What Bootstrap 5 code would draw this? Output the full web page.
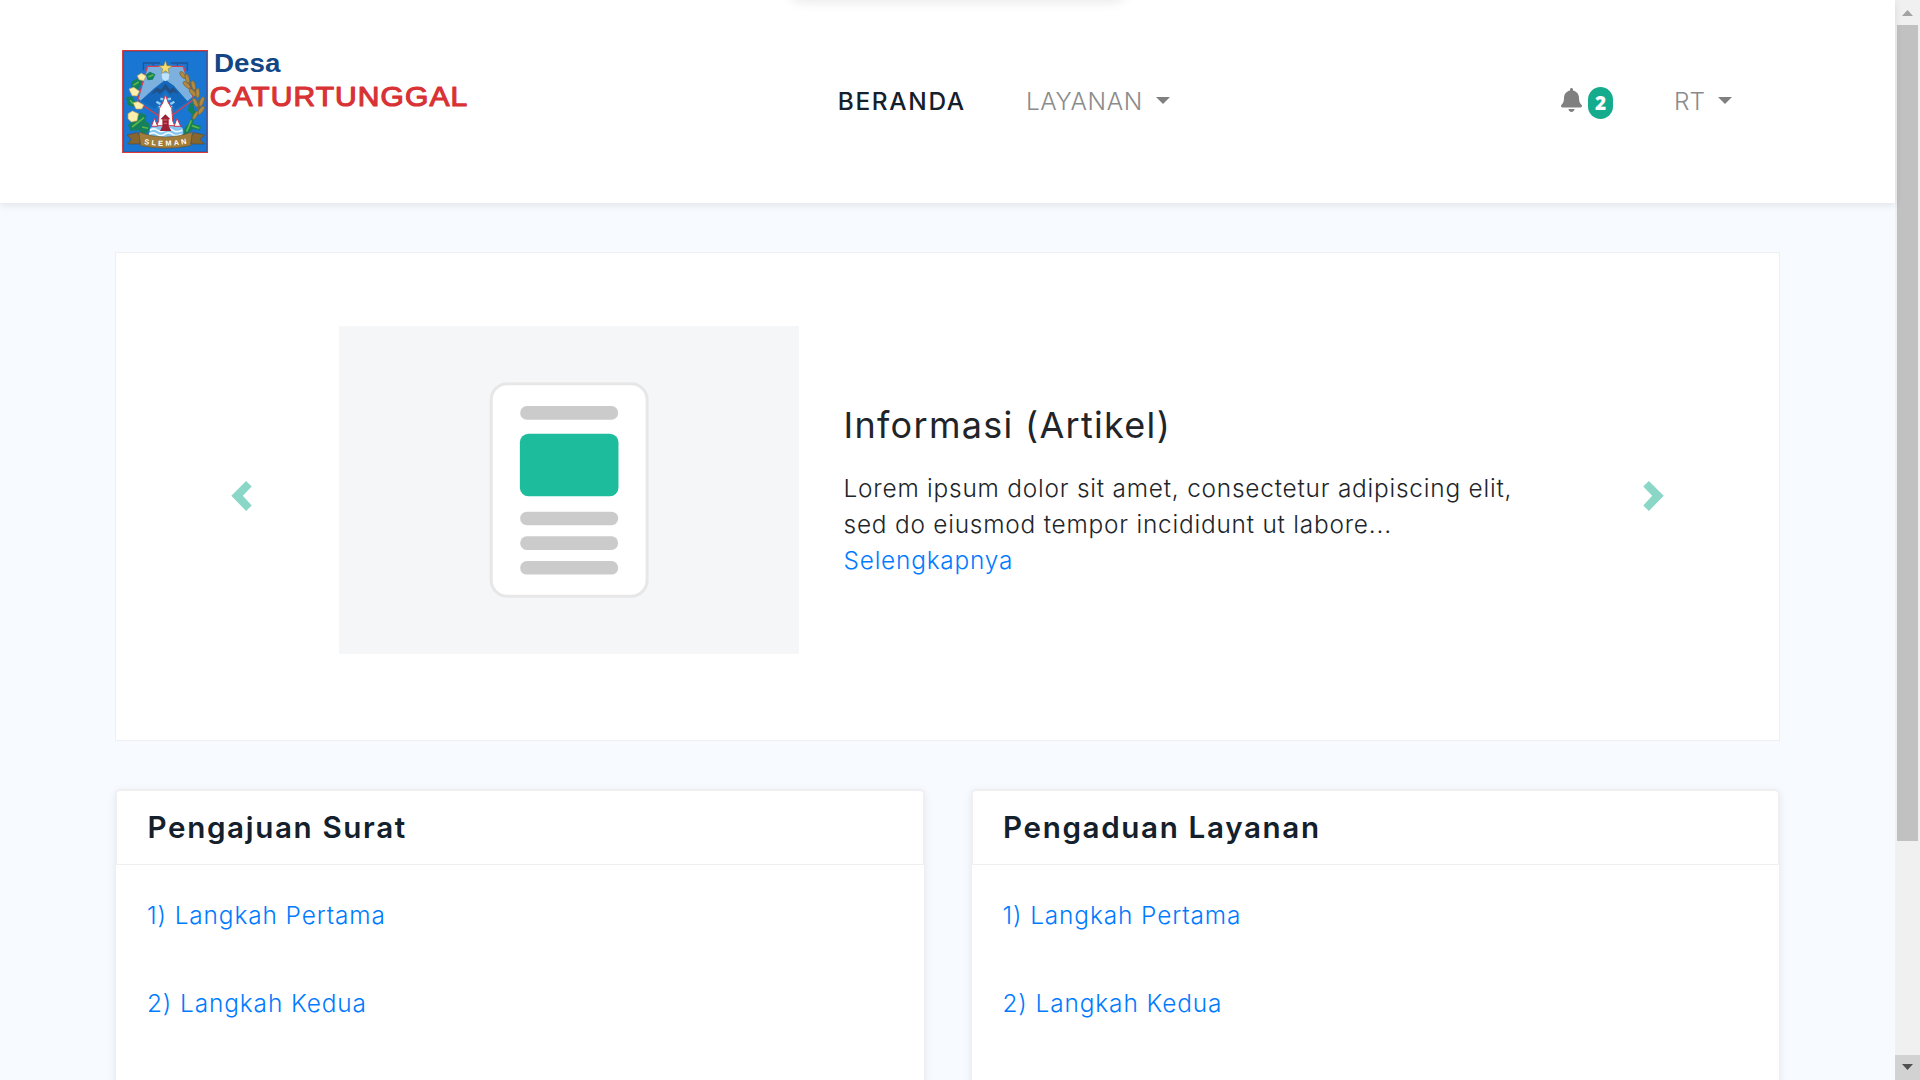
<!DOCTYPE html>
<html lang="id">
<head>
<meta charset="utf-8">
<title>Desa Caturtunggal</title>
<meta name="viewport" content="width=device-width, initial-scale=1">
<link href="https://cdn.jsdelivr.net/npm/bootstrap@5.3.0/dist/css/bootstrap.min.css" rel="stylesheet">
<style>
body{font-family:Inter,"Open Sans",sans-serif;font-weight:300;font-size:24.4px;line-height:36px;letter-spacing:.79px;background:#f7faff;color:#212529;overflow:hidden}
a{text-decoration:none;color:#007bff}
.page{width:1895px}
.wrap{width:1665px;margin:0 auto}
.topbar{height:203px;background:#fff;box-shadow:0 2px 8px rgba(0,0,0,.1)}
.topbar .wrap{padding-left:7px;padding-right:48px}
.window-shade{position:absolute;top:-20px;left:794px;width:328px;height:18px;box-shadow:0 0 12px 4px rgba(0,0,0,.09);border-radius:8px}
.menu{margin-left:369px;gap:60px;padding-bottom:1px}
.user{gap:61px;padding-bottom:1px}
.menu a,.user a{color:#8b8b8b;white-space:nowrap;letter-spacing:.6px}
.menu a.now{color:#14202b;font-weight:500;letter-spacing:1.7px}
.user a.role{letter-spacing:0}
.caret{display:inline-block;border:7px solid transparent;border-top-color:#808080;border-bottom:0;margin-left:13px;vertical-align:6px}
.user .caret{margin-left:13px}
.bell{margin-bottom:3px}
.count{width:25px;height:32px;border-radius:12.5px;background:#15ac8d;color:#fff;font:800 19px/32px "Open Sans",sans-serif;letter-spacing:0;text-align:center;margin:4px 0 0 6px}
.slide-box{margin-top:49px;height:489px;background:#fff;border:1px solid #eeeff1;padding:73px 115px 0 114.5px}
.slide-art{margin-left:87px}
.slide-text{width:700px;margin-left:45px;padding-top:2px}
.slide-text h3{font-size:36px;line-height:42px;font-weight:400;letter-spacing:1.3px;margin:0 0 24px}
.arrow{margin-top:12px}
.panels{margin-top:48px;gap:46px}
.panel{flex:1;border:1px solid #efeff1;border-radius:5px;background:#fff;box-shadow:0 2px 8px rgba(0,0,0,.08);height:400px}
.panel-head{height:75px;border:1px solid #efeff1;border-radius:4px 4px 0 0;padding:0 30.5px;font-size:29.6px;font-weight:600;letter-spacing:1.65px;line-height:73px;color:#14202b}
.panel-steps{padding:32px 31px;gap:52px;letter-spacing:.9px}
.scroll{width:25px;background:#f0f0f0}
.thumb{width:21px;height:816px;background:#c1c1c1}
.scroll-end{height:25px}
</style>
<script src="https://cdn.jsdelivr.net/npm/bootstrap@5.3.0/dist/js/bootstrap.bundle.min.js"></script>
</head>
<body>
<div class="d-flex vh-100 overflow-hidden">
<div class="page flex-shrink-0">
  <header class="topbar position-relative">
    <div class="window-shade"></div>
    <div class="wrap h-100 d-flex align-items-center">
      <a href="#" class="d-block">
        <svg class="d-block" width="346.7" height="103.3" viewBox="66 59 1040 310">
          <rect x="68" y="61" width="254" height="306" fill="#1976d2" stroke="#d7393d" stroke-width="4"/>
          <rect x="71" y="64" width="248" height="300" fill="none" stroke="#31589b" stroke-width="2"/>
          <path d="M130 120V98H160V106M262 122V98H232V106M160 98H180M212 98H232" fill="none" stroke="#205595" stroke-width="4"/>
          <path d="M142 108H250L281 207L196 270L112 214Z" fill="#1575ca" stroke="#d63f4f" stroke-width="4"/>
          <path d="M144 110H248L277 200L262 212L220 165L196 150L160 180L122 211L116 205Z" fill="#7bb0df"/>
          <path d="M196 148L222 168L262 214L224 238L210 200L196 180L182 205L165 236L122 211L160 176Z" fill="#1467ba"/>
          <path d="M152 193L170 172L184 178L196 160L211 178L219 171L235 190L219 184L211 192L196 176L179 190L170 184Z" fill="#244f80"/>
          <path d="M184 129L208 129L206 147L196 153L187 147Z" fill="#bfe3fb"/>
          <path d="M196 91L201 106L216 107L204 116L208 130L196 121L184 130L188 116L176 107L191 106Z" fill="#f6df70" stroke="#8c8450" stroke-width="2"/>
          <path d="M169 214L181 221M176 232L185 228M223 214L211 221M216 232L207 228M190 207L181 205M202 207L213 205" stroke="#8fd0fa" stroke-width="7"/>
          <path d="M166 282L226 282L248 293L252 319Q196 334 144 319L151 293Z" fill="#83c5ef"/>
          <path d="M150 300q12-8 23 0t23 0 23 0 28 0M148 312q12-8 23 0t23 0 23 0 28 0" fill="none" stroke="#eefaff" stroke-width="5"/>
          <path d="M196 194L205 218L215 234L218 272L224 286H170L176 272L178 234L188 218Z" fill="#fff" stroke="#d33d4d" stroke-width="3"/>
          <path d="M154 288L163 264L173 288ZM222 288L231 264L242 288Z" fill="#fff" stroke="#c43752" stroke-width="3"/>
          <path d="M196 252L211 267H206V288L214 302H180L187 288V267H181Z" fill="#9d2035"/>
          <path d="M190 269H202M191 279H201" stroke="#e06a70" stroke-width="3"/>
          <g fill="#15805d">
            <path d="M137 134L149 124L166 132L158 148L143 150Z"/><path d="M94 154L109 145L127 151L119 173L103 181L93 170Z"/>
            <path d="M78 201L96 197L105 214L100 230L84 225Z"/><path d="M84 284L98 269L122 247L139 255L137 272L150 282L145 306L130 311L116 300L91 301Z"/>
            <path d="M249 316L254 292L270 275L276 251L264 241L267 225L277 215L286 248L280 281L302 286L300 301L280 296L265 307Z"/>
          </g>
          <path d="M100 165L116 155M90 210L99 220M96 290L132 262M126 290L144 294M260 303L274 270M276 286L298 294M145 140L160 133" stroke="#5cb648" stroke-width="5"/>
          <g fill="#fff0ae" stroke="#d7a859" stroke-width="2">
            <path d="M112 136L124 129L138 137L131 151L117 148Z"/><path d="M87 176L101 171L118 183L111 197L96 196Z"/>
            <path d="M99 217L114 214L131 224L125 236L108 236Z"/><path d="M84 250L97 242L115 250L111 271L94 275L84 265Z"/>
          </g>
          <path d="M240 128Q306 180 293 252" fill="none" stroke="#826738" stroke-width="4"/>
          <g fill="#b38a3d" stroke="#6c6445" stroke-width="2">
            <ellipse cx="248" cy="134" rx="6" ry="12" transform="rotate(-35 248 134)"/><ellipse cx="262" cy="145" rx="6" ry="14" transform="rotate(-15 262 145)"/>
            <ellipse cx="260" cy="164" rx="6" ry="14" transform="rotate(-45 260 164)"/><ellipse cx="280" cy="165" rx="6" ry="14" transform="rotate(-15 280 165)"/>
            <ellipse cx="278" cy="187" rx="6" ry="14" transform="rotate(-40 278 187)"/><ellipse cx="293" cy="188" rx="6" ry="14"/>
            <ellipse cx="286" cy="217" rx="6" ry="15" transform="rotate(-25 286 217)"/><ellipse cx="305" cy="214" rx="6" ry="15" transform="rotate(20 305 214)"/>
            <ellipse cx="303" cy="240" rx="6" ry="15" transform="rotate(35 303 240)"/><ellipse cx="286" cy="255" rx="5" ry="14" transform="rotate(30 286 255)"/>
          </g>
          <path d="M81 314L110 307L123 320L118 341H83L94 327ZM314 314L284 307L270 320L276 341H313L300 327Z" fill="#87662f" stroke="#594c38" stroke-width="2"/>
          <path d="M116 305Q196 336 277 305L271 346Q196 362 122 346Z" fill="#a27c39" stroke="#69522f" stroke-width="2"/>
          <path id="ribbon" d="M132 341Q196 353 264 339" fill="none"/>
          <text font-family="Liberation Sans,sans-serif" font-weight="700" font-size="22" fill="#fff" letter-spacing="0"><textPath href="#ribbon" textLength="129">SLEMAN</textPath></text>
          <text x="342" y="126" font-family="Liberation Sans,sans-serif" font-weight="700" font-size="79" fill="#124684" letter-spacing="0" textLength="199" lengthAdjust="spacingAndGlyphs">Desa</text>
          <text x="329" y="228" font-family="Liberation Sans,sans-serif" font-size="84" fill="#d83235" stroke="#d83235" stroke-width="3.500" stroke-linejoin="round" letter-spacing="3" textLength="776" lengthAdjust="spacingAndGlyphs">CATURTUNGGAL</text>
        </svg>
      </a>
      <nav class="menu d-flex">
        <a class="now" href="#">BERANDA</a>
        <a href="#">LAYANAN<span class="caret"></span></a>
      </nav>
      <div class="user d-flex align-items-center ms-auto">
        <a href="#" class="d-flex align-items-center">
          <svg class="bell" width="21" height="24" viewBox="0 0 448 512" fill="#808080"><path d="M224 512c35.320 0 63.970-28.650 63.970-64H160.030c0 35.350 28.650 64 63.970 64zm215.390-149.710c-19.320-20.760-55.470-51.990-55.470-154.290 0-77.700-54.480-139.900-127.940-155.160V32c0-17.670-14.320-32-31.980-32s-31.980 14.330-31.980 32v20.840C118.560 68.100 64.080 130.300 64.080 208c0 102.300-36.150 133.530-55.470 154.290-6 6.450-8.660 14.160-8.610 21.710.11 16.400 12.980 32 32.100 32h383.800c19.120 0 32-15.600 32.100-32 .05-7.550-2.610-15.270-8.610-21.710z"/></svg>
          <span class="count">2</span>
        </a>
        <a class="role" href="#">RT<span class="caret"></span></a>
      </div>
    </div>
  </header>

  <main class="wrap">
    <section class="slide-box d-flex align-items-start">
      <div class="d-flex align-items-center w-100">
        <svg class="arrow flex-shrink-0" width="21" height="30" viewBox="0 0 62 91" fill="#8ad7c8"><path d="M45 0L62 17L35 45L62 74L45 91L0 45Z"/></svg>
        <svg class="slide-art flex-shrink-0" width="460" height="328" viewBox="55 48 1381 984">
          <rect x="55" y="48" width="1381" height="984" fill="#f4f6f8"/>
          <rect x="512" y="221" width="468" height="638" rx="48" fill="#fff" stroke="#e7e7e7" stroke-width="9"/>
          <g fill="#cbcbcb"><rect x="599" y="288" width="294" height="41" rx="20"/><rect x="599" y="605" width="294" height="41" rx="20"/><rect x="599" y="679" width="294" height="41" rx="20"/><rect x="599" y="753" width="294" height="41" rx="20"/></g>
          <rect x="598" y="371" width="296" height="188" rx="26" fill="#1cbc9c"/>
        </svg>
        <div class="slide-text">
          <h3>Informasi (Artikel)</h3>
          <div>Lorem ipsum dolor sit amet, consectetur adipiscing elit,<br>sed do eiusmod tempor incididunt ut labore...</div>
          <a href="#">Selengkapnya</a>
        </div>
        <svg class="arrow flex-shrink-0 ms-auto" width="21" height="30" viewBox="0 0 62 91" fill="#8ad7c8"><path d="M17 0L0 17L27 45L0 74L17 91L62 45Z"/></svg>
      </div>
    </section>

    <section class="panels d-flex">
      <div class="panel">
        <div class="panel-head">Pengajuan Surat</div>
        <div class="panel-steps d-flex flex-column">
          <a href="#">1) Langkah Pertama</a>
          <a href="#">2) Langkah Kedua</a>
        </div>
      </div>
      <div class="panel">
        <div class="panel-head">Pengaduan Layanan</div>
        <div class="panel-steps d-flex flex-column">
          <a href="#">1) Langkah Pertama</a>
          <a href="#">2) Langkah Kedua</a>
        </div>
      </div>
    </section>
  </main>
</div>
<div class="scroll flex-shrink-0 d-flex flex-column">
  <svg class="scroll-end d-block" width="25" height="25"><path d="M7 16L12.500 10L18 16Z" fill="#a3a3a3"/></svg>
  <div class="thumb ms-auto me-auto"></div>
  <svg class="scroll-end d-block mt-auto" width="25" height="25"><rect width="25" height="25" fill="#d2d2d2"/><path d="M7 9H18L12.500 15Z" fill="#505050"/></svg>
</div>
</div>
</body>
</html>
